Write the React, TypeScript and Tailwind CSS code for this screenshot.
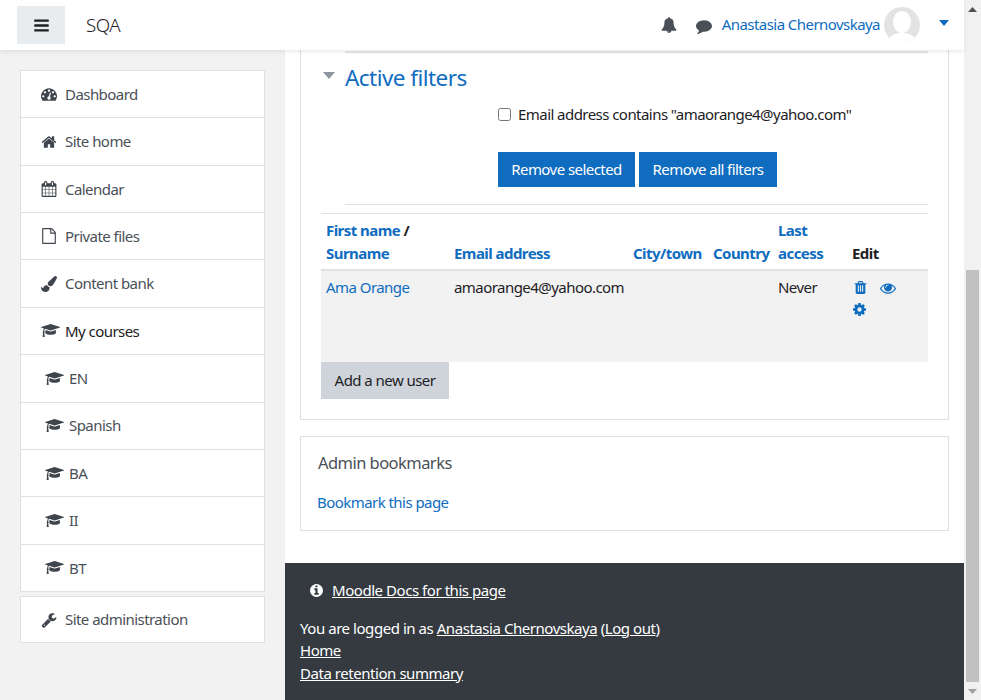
import type { ReactNode } from 'react'

const FONT = "font-['Noto_Sans',sans-serif]"

// Font Awesome 4 glyphs, the ones in the reference differ from the FA5 set in react-icons
const ICONS = {
  bars: 'M1664 1344v128q0 26-19 45t-45 19h-1408q-26 0-45-19t-19-45v-128q0-26 19-45t45-19h1408q26 0 45 19t19 45zm0-512v128q0 26-19 45t-45 19h-1408q-26 0-45-19t-19-45v-128q0-26 19-45t45-19h1408q26 0 45 19t19 45zm0-512v128q0 26-19 45t-45 19h-1408q-26 0-45-19t-19-45v-128q0-26 19-45t45-19h1408q26 0 45 19t19 45z',
  bell: 'M912 1696q0-16-16-16-59 0-101.500-42.500t-42.500-101.500q0-16-16-16t-16 16q0 73 51.500 124.500t124.500 51.500q16 0 16-16zm816-288q0 52-38 90t-90 38h-448q0 106-75 181t-181 75-181-75-75-181h-448q-52 0-90-38t-38-90q50-42 91-88t85-119.500 74.500-158.500 50-206 19.500-260q0-152 117-282.500t307-158.500q-8-19-8-39 0-40 28-68t68-28 68 28 28 68q0 20-8 39 190 28 307 158.500t117 282.500q0 139 19.500 260t50 206 74.500 158.500 85 119.500 91 88z',
  comment: 'M1792 896q0 174-120 321.500t-326 233-450 85.500q-70 0-145-8-198 175-460 242-49 14-114 22-17 2-30.500-9t-17.500-29v-1q-3-4-.5-12t2-10 4.500-9.500l6-9 7-8.500 8-9q7-8 31-34.500t34.500-38 31-39.500 32.500-51 27-59 26-76q-157-89-247.500-220t-90.500-281q0-130 71-248.500t191-204.500 286-136.500 348-50.500q244 0 450 85.500t326 233 120 321.500z',
  dashboard: 'M384 1152q0-53-37.500-90.500t-90.500-37.500-90.500 37.500-37.500 90.500 37.500 90.500 90.500 37.500 90.500-37.500 37.500-90.500zm192-448q0-53-37.500-90.500t-90.500-37.500-90.500 37.500-37.500 90.500 37.500 90.500 90.500 37.500 90.500-37.500 37.500-90.500zm428 481l101-382q6-26-7.500-48.500t-38.500-29.500-48 6.500-30 39.500l-101 382q-60 5-107 43.500t-63 98.500q-20 77 20 146t117 89 146-20 89-117q16-60-6-117t-72-91zm660-33q0-53-37.500-90.500t-90.500-37.500-90.500 37.500-37.500 90.500 37.500 90.500 90.500 37.500 90.500-37.500 37.500-90.500zm-640-640q0-53-37.500-90.500t-90.500-37.500-90.500 37.500-37.500 90.500 37.500 90.500 90.500 37.500 90.500-37.500 37.500-90.500zm448 192q0-53-37.500-90.500t-90.500-37.500-90.500 37.500-37.500 90.500 37.500 90.500 90.500 37.500 90.500-37.500 37.500-90.500zm320 448q0 261-141 483-19 29-54 29h-1402q-35 0-54-29-141-221-141-483 0-182 71-348t191-286 286-191 348-71 348 71 286 191 191 286 71 348z',
  home: 'M1472 992v480q0 26-19 45t-45 19h-384v-384h-256v384h-384q-26 0-45-19t-19-45v-480q0-1 .5-3t.5-3l575-474 575 474q1 2 1 6zm223-69l-62 74q-8 9-21 11h-3q-13 0-21-7l-692-577-692 577q-12 8-24 7-13-2-21-11l-62-74q-8-10-7-23.500t11-21.500l719-599q32-26 76-26t76 26l244 204v-195q0-14 9-23t23-9h192q14 0 23 9t9 23v408l219 182q10 8 11 21.500t-7 23.500z',
  calendar: 'M192 1664h288v-288h-288v288zm352 0h320v-288h-320v288zm-352-352h288v-320h-288v320zm352 0h320v-320h-320v320zm-352-384h288v-288h-288v288zm736 736h320v-288h-320v288zm-384-736h320v-288h-320v288zm768 736h288v-288h-288v288zm-384-352h320v-320h-320v320zm-352-864v-288q0-13-9.500-22.500t-22.500-9.500h-64q-13 0-22.500 9.500t-9.500 22.500v288q0 13 9.500 22.500t22.500 9.500h64q13 0 22.500-9.500t9.500-22.500zm736 864h288v-320h-288v320zm-384-384h320v-288h-320v288zm384 0h288v-288h-288v288zm32-480v-288q0-13-9.500-22.500t-22.500-9.500h-64q-13 0-22.500 9.500t-9.500 22.500v288q0 13 9.500 22.500t22.500 9.500h64q13 0 22.500-9.500t9.500-22.500zm384-64v1280q0 52-38 90t-90 38h-1408q-52 0-90-38t-38-90v-1280q0-52 38-90t90-38h128v-96q0-66 47-113t113-47h64q66 0 113 47t47 113v96h384v-96q0-66 47-113t113-47h64q66 0 113 47t47 113v96h128q52 0 90 38t38 90z',
  file: 'M1596 380q28 28 48 76t20 88v1152q0 40-28 68t-68 28h-1344q-40 0-68-28t-28-68v-1600q0-40 28-68t68-28h896q40 0 88 20t76 48zm-444-244v376h376q-10-29-22-41l-313-313q-12-12-41-22zm384 1528v-1024h-416q-40 0-68-28t-28-68v-416h-768v1536h1280z',
  brush: 'M1615 0q70 0 122.500 46.500t52.500 116.500q0 63-45 151-332 629-465 752-97 91-218 91-126 0-216.500-92.500t-90.500-219.500q0-128 92-212l638-579q59-54 130-54zm-909 1034q39 76 106.500 130t150.500 76l1 71q4 213-129.500 347t-348.500 134q-123 0-218-46.500t-152.500-127.500-86.500-183-29-220q7 5 41 30t62 44.500 59 36.500 46 17q41 0 55-37 25-66 57.500-112.500t69.500-76 88-47.500 103-25.500 125-10.500z',
  cap: 'M1774 836l18 316q4 69-82 128t-235 93.500-323 34.500-323-34.500-235-93.500-82-128l18-316 574 181q22 7 48 7t48-7zm530-324q0 23-22 31l-1120 352q-4 1-10 1t-10-1l-652-206q-43 34-71 111.500t-34 178.500q63 36 63 109 0 69-58 107l58 433q2 14-8 25-9 11-24 11h-192q-15 0-24-11-10-11-8-25l58-433q-58-38-58-107 0-73 65-111 11-207 98-330l-333-104q-22-8-22-31t22-31l1120-352q4-1 10-1t10 1l1120 352q22 8 22 31z',
  wrench: 'M448 1472q0-26-19-45t-45-19-45 19-19 45 19 45 45 19 45-19 19-45zm644-420l-682 682q-37 37-90 37-52 0-91-37l-106-108q-38-36-38-90 0-53 38-91l681-681q39 98 114.500 173.500t173.500 114.500zm634-435q0 39-23 106-47 134-164.500 217.500t-258.500 83.500q-185 0-316.500-131.500t-131.500-316.500 131.500-316.500 316.500-131.500q58 0 121.500 16.500t107.500 46.500q16 11 16 28t-16 28l-293 169v224l193 107q5-3 79-48.500t135.500-81 70.500-35.500q15 0 23.500 10t8.500 25z',
  trash: 'M704 1376v-704q0-14-9-23t-23-9h-64q-14 0-23 9t-9 23v704q0 14 9 23t23 9h64q14 0 23-9t9-23zm256 0v-704q0-14-9-23t-23-9h-64q-14 0-23 9t-9 23v704q0 14 9 23t23 9h64q14 0 23-9t9-23zm256 0v-704q0-14-9-23t-23-9h-64q-14 0-23 9t-9 23v704q0 14 9 23t23 9h64q14 0 23-9t9-23zm-544-992h448l-48-117q-7-9-17-11h-317q-10 2-17 11zm928 32v64q0 14-9 23t-23 9h-96v948q0 83-47 143.500t-113 60.500h-832q-66 0-113-58.500t-47-141.500v-952h-96q-14 0-23-9t-9-23v-64q0-14 9-23t23-9h309l70-167q15-37 54-63t79-26h320q40 0 79 26t54 63l70 167h309q14 0 23 9t9 23z',
  eye: 'M1664 960q-152-236-381-353 61 104 61 225 0 185-131.500 316.500t-316.500 131.500-316.500-131.500-131.500-316.500q0-121 61-225-229 117-381 353 133 205 333.500 326.500t434.500 121.500 434.500-121.500 333.500-326.500zm-720-384q0-20-14-34t-34-14q-125 0-214.500 89.500t-89.500 214.500q0 20 14 34t34 14 34-14 14-34q0-86 61-147t147-61q20 0 34-14t14-34zm848 384q0 34-20 69-140 230-376.500 368.500t-499.500 138.500-499.500-139-376.500-368q-20-35-20-69t20-69q140-229 376.500-368t499.500-139 499.500 139 376.500 368q20 35 20 69z',
  cog: 'M1152 896q0-106-75-181t-181-75-181 75-75 181 75 181 181 75 181-75 75-181zm512-109v222q0 12-8 23t-20 13l-185 28q-19 54-39 91 35 50 107 138 10 12 10 25t-9 23q-27 37-99 108t-94 71q-12 0-26-9l-138-108q-44 23-91 38-16 136-29 186-7 28-36 28h-222q-14 0-24.500-8.500t-11.500-21.500l-28-184q-49-16-90-37l-141 107q-10 9-25 9-14 0-25-11-126-114-165-168-7-10-7-23 0-12 8-23 15-21 51-66.500t54-70.500q-27-50-41-99l-183-27q-13-2-21-12.500t-8-23.500v-222q0-12 8-23t19-13l186-28q14-46 39-92-40-57-107-138-10-12-10-24 0-10 9-23 26-36 98.500-107.500t94.500-71.500q13 0 26 10l138 107q44-23 91-38 16-136 29-186 7-28 36-28h222q14 0 24.500 8.500t11.500 21.500l28 184q49 16 90 37l142-107q9-9 24-9 13 0 25 10 129 119 165 170 7 8 7 22 0 12-8 23-15 21-51 66.500t-54 70.500q26 50 41 98l183 28q13 2 21 12.500t8 23.500z',
  info: 'M1152 1376v-160q0-14-9-23t-23-9h-96v-512q0-14-9-23t-23-9h-320q-14 0-23 9t-9 23v160q0 14 9 23t23 9h96v320h-96q-14 0-23 9t-9 23v160q0 14 9 23t23 9h448q14 0 23-9t9-23zm-128-896v-160q0-14-9-23t-23-9h-192q-14 0-23 9t-9 23v160q0 14 9 23t23 9h192q14 0 23-9t9-23zm640 416q0 209-103 385.500t-279.500 279.500-385.500 103-385.500-103-279.500-279.500-103-385.500 103-385.500 279.500-279.500 385.500-103 385.500 103 279.500 279.500 103 385.500z',
}

interface GlyphProps {
  name: keyof typeof ICONS
  size?: number
  vbWidth?: number
  className?: string
}

function Glyph({ name, size = 16, vbWidth = 1792, className }: GlyphProps) {
  return (
    <svg
      width={(size * vbWidth) / 1792}
      height={size}
      viewBox={`0 0 ${vbWidth} 1792`}
      fill="currentColor"
      className={className}
    >
      <path d={ICONS[name]} />
    </svg>
  )
}

const capIcon = <Glyph name="cap" size={15} vbWidth={2304} />

interface NavRowProps {
  icon: ReactNode
  label: string
  nested?: boolean
  active?: boolean
  last?: boolean
  alone?: boolean
}

function NavRow({ icon, label, nested, active, last, alone }: NavRowProps) {
  const height = alone ? 'h-[45.4px]' : last ? 'h-[46.4px]' : 'h-[47.37px] border-b border-[#dfdfdf]'
  return (
    <div
      className={`flex items-center pr-3 ${nested ? 'pl-6' : 'pl-5'} ${height} ${
        active ? 'text-[#1d2125]' : 'text-[#495057]'
      }`}
    >
      <span className="flex w-6 shrink-0 items-center text-[#3f454c]">{icon}</span>
      <span>{label}</span>
    </div>
  )
}

function Sidebar() {
  return (
    <aside className="w-[285px] shrink-0 bg-[#f2f2f2] pt-5 pl-5">
      <div className="w-[245px] border border-[#dfdfdf] bg-white">
        <NavRow icon={<Glyph name="dashboard" />} label="Dashboard" />
        <NavRow icon={<Glyph name="home" />} label="Site home" />
        <NavRow icon={<Glyph name="calendar" />} label="Calendar" />
        <NavRow icon={<Glyph name="file" />} label="Private files" />
        <NavRow icon={<Glyph name="brush" />} label="Content bank" />
        <NavRow icon={capIcon} label="My courses" active />
        <NavRow icon={capIcon} label="EN" nested />
        <NavRow icon={capIcon} label="Spanish" nested />
        <NavRow icon={capIcon} label="BA" nested />
        <NavRow icon={capIcon} label="II" nested />
        <NavRow icon={capIcon} label="BT" nested last />
      </div>
      <div className="mt-[4px] w-[245px] border border-[#dfdfdf] bg-white">
        <NavRow icon={<Glyph name="wrench" />} label="Site administration" alone />
      </div>
    </aside>
  )
}

function Avatar() {
  return (
    <svg width="36" height="36" viewBox="0 0 36 36" className="ml-1">
      <defs>
        <clipPath id="avatar-clip">
          <circle cx="18" cy="18" r="18" />
        </clipPath>
      </defs>
      <g clipPath="url(#avatar-clip)">
        <rect width="36" height="36" fill="#e3e3e3" />
        <ellipse cx="18" cy="15" rx="9" ry="11" fill="#fff" />
        <path d="M4 36c1-8 7-10 14-10s13 2 14 10z" fill="#fff" />
      </g>
    </svg>
  )
}

function Header() {
  return (
    <header className="relative z-10 flex h-[50px] shrink-0 items-center bg-white pl-[17px] shadow-[0_2px_4px_rgba(0,0,0,0.08)]">
      <div className="flex h-[38px] w-12 items-center justify-center bg-[#e9ecef] text-[#1d2125]">
        <Glyph name="bars" size={17} />
      </div>
      <span className="ml-[21px] text-[18.75px] font-light text-[#1d2125]">SQA</span>
      <div className="ml-auto flex items-center pr-[15px]">
        <Glyph name="bell" size={16} className="text-[#495057]" />
        <Glyph name="comment" size={16} className="mt-[2px] ml-[19px] text-[#495057]" />
        <span className="mb-[2px] ml-[10px] text-[#0f6cbf]">Anastasia Chernovskaya</span>
        <Avatar />
        <svg width="10" height="6" viewBox="0 0 10 6" className="mb-1 ml-[19px]">
          <path d="M0 0h10L5 6z" fill="#0f6cbf" />
        </svg>
      </div>
    </header>
  )
}

function UsersTable() {
  return (
    <table className="w-[607px] table-fixed border-collapse">
      <thead>
        <tr className="border-t border-b-2 border-t-[#dee2e6] border-b-[#dee2e6] font-bold">
          <th className="w-[128px] px-[5px] pt-[5.5px] pb-[4.500px] text-left align-bottom font-bold">
            <span className="text-[#0f6cbf]">First name</span> /
            <br />
            <span className="text-[#0f6cbf]">Surname</span>
          </th>
          <th className="w-[179px] px-[5px] pb-[4.500px] text-left align-bottom font-bold text-[#0f6cbf]">Email address</th>
          <th className="w-[80px] px-[5px] pb-[4.500px] text-left align-bottom font-bold whitespace-nowrap text-[#0f6cbf]">City/town</th>
          <th className="w-[65px] px-[5px] pb-[4.500px] text-left align-bottom font-bold text-[#0f6cbf]">Country</th>
          <th className="w-[74px] px-[5px] pb-[4.500px] text-left align-bottom font-bold text-[#0f6cbf]">
            Last
            <br />
            access
          </th>
          <th className="px-[5px] pb-[4.500px] text-left align-bottom font-bold">Edit</th>
        </tr>
      </thead>
      <tbody>
        <tr className="h-[92px] bg-[#f2f2f2] align-top">
          <td className="px-[5px] pt-[5px] text-[#0f6cbf]">Ama Orange</td>
          <td className="px-[5px] pt-[5px]">amaorange4@yahoo.com</td>
          <td />
          <td />
          <td className="px-[5px] pt-[5px]">Never</td>
          <td className="px-[5px] pt-[9px] text-[#0f6cbf]">
            <div className="flex flex-wrap gap-y-[6px]">
              <span className="flex w-7 pl-px">
                <Glyph name="trash" size={15} />
              </span>
              <span className="flex w-7">
                <Glyph name="eye" size={16} />
              </span>
              <span className="flex w-7">
                <Glyph name="cog" size={15} />
              </span>
            </div>
          </td>
        </tr>
      </tbody>
    </table>
  )
}

function MainCard() {
  return (
    <section className="w-[649px] border-x border-b border-[#dfdfdf] px-5 pt-px pb-5">
      <div className="ml-6 border-t-2 border-[#e6e6e6]" />
      <div className="mt-[11px] flex h-[27px] items-center">
        <svg width="12" height="7" viewBox="0 0 12 7" className="mr-[10px] mb-1 ml-[2px]">
          <path d="M0 0h12L6 7z" fill="#8f959e" />
        </svg>
        <h3 className="text-[22.5px] leading-[27px] text-[#0f6cbf]">Active filters</h3>
      </div>
      <label className="mt-[12px] ml-[177px] flex h-[22.5px] items-center">
        <input type="checkbox" className="mr-[7px] h-[13px] w-[13px]" />
        Email address contains "amaorange4@yahoo.com"
      </label>
      <div className="mt-[26px] ml-[177px] flex gap-1">
        <button className="h-[35px] w-[137px] bg-[#0f6cbf] text-white">Remove selected</button>
        <button className="h-[35px] w-[138px] bg-[#0f6cbf] text-white">Remove all filters</button>
      </div>
      <div className="mt-[17px] mb-2 ml-6 border-t border-[#dee2e6]" />
      <UsersTable />
      <button className="h-[37px] w-[128px] bg-[#ced4da] text-[#1d2125]">Add a new user</button>
    </section>
  )
}

function BookmarksCard() {
  return (
    <section className="mt-4 h-[95px] w-[649px] border border-[#dfdfdf] px-4 pt-[14px]">
      <h5 className="ml-px text-[16.5px] leading-[24px] text-[#495057]">Admin bookmarks</h5>
      <p className="mt-[16px] text-[#0f6cbf]">Bookmark this page</p>
    </section>
  )
}

function Footer() {
  return (
    <footer className="mt-auto h-[137px] bg-[#343a40] px-[15px] pt-[16px] tracking-[-0.45px] text-white">
      <div className="flex items-center pl-[9px]">
        <Glyph name="info" size={15} className="mr-[8px]" />
        <span className="underline">Moodle Docs for this page</span>
      </div>
      <p className="mt-[15px]">
        You are logged in as <span className="underline">Anastasia Chernovskaya</span> (
        <span className="underline">Log out</span>)
      </p>
      <p className="underline">Home</p>
      <p className="underline">Data retention summary</p>
    </footer>
  )
}

function Scrollbar() {
  return (
    <div className="flex w-[17px] shrink-0 flex-col items-center bg-[#f1f1f1]">
      <svg width="9" height="5" viewBox="0 0 9 5" className="mt-[7px]">
        <path d="M4.5 0L9 5H0z" fill="#505050" />
      </svg>
      <div className="mt-[258px] h-[412px] w-[13px] bg-[#c1c1c1]" />
      <svg width="9" height="5" viewBox="0 0 9 5" className="mt-[7px]">
        <path d="M0 0h9L4.500 5z" fill="#a0a0a0" />
      </svg>
    </div>
  )
}

export default function App() {
  return (
    <div className={`flex h-[700px] w-[981px] overflow-hidden bg-white text-[15px] leading-[22.5px] tracking-[-0.55px] text-[#1d2125] ${FONT}`}>
      <div className="flex w-[964px] flex-col">
        <Header />
        <div className="flex flex-1">
          <Sidebar />
          <main className="flex flex-1 flex-col">
            <div className="pl-[15px]">
              <MainCard />
              <BookmarksCard />
            </div>
            <Footer />
          </main>
        </div>
      </div>
      <Scrollbar />
    </div>
  )
}
